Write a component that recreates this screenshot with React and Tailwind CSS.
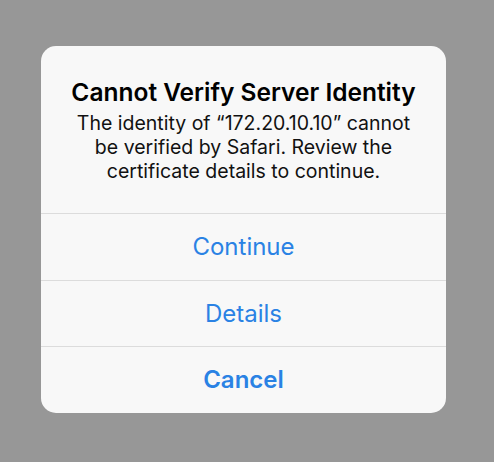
export default function App() {
  const buttons = [
    { label: 'Continue', bold: false },
    { label: 'Details', bold: false },
    { label: 'Cancel', bold: true },
  ];

  return (
    <div className="w-[494px] h-[462px] bg-[#979797] pt-[46px] pl-[41px]" style={{ fontFamily: 'Inter, "Noto Sans", sans-serif' }}>
      <div className="w-[405px] h-[367px] bg-[#f8f8f8] rounded-[15px] overflow-hidden flex flex-col">
        <div className="h-[168px] pt-[31px] px-2 text-center border-b border-[#dcdcdc]">
          <h1 className="text-[24.5px] leading-[30px] font-semibold text-black">Cannot Verify Server Identity</h1>
          <p className="mt-[4px] text-[19.5px] leading-[24px] text-[#111]">
            The identity of “172.20.10.10” cannot<br />
            be verified by Safari. Review the<br />
            certificate details to continue.
          </p>
        </div>
        {buttons.map((b, i) => (
          <button
            key={b.label}
            className={`flex-1 flex items-center justify-center text-[24px] text-[#2a82e4] ${b.bold ? 'font-semibold' : ''} ${i < buttons.length - 1 ? 'border-b border-[#dcdcdc]' : ''}`}
          >
            {b.label}
          </button>
        ))}
      </div>
    </div>
  );
}
